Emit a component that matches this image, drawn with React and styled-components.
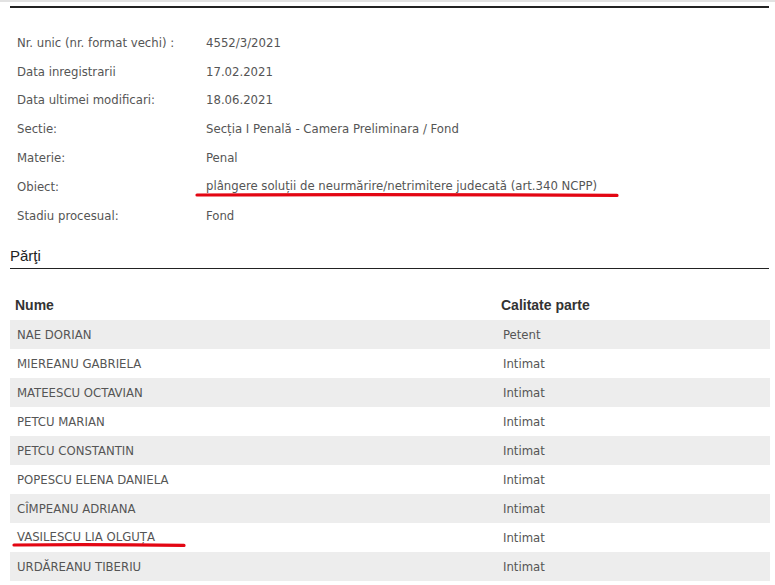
import React from "react";
import styled, { createGlobalStyle } from "styled-components";

const Global = createGlobalStyle`
  html, body { margin: 0; padding: 0; background: #fff; }
  body { font-family: "DejaVu Sans Condensed", "DejaVu Sans", sans-serif; }
`;

const Page = styled.div`
  width: 775px;
  height: 585px;
  overflow: hidden;
  background: #fff;
  border-top: 2px solid #e2e2e2;
  box-sizing: border-box;
`;

const Content = styled.div`
  padding: 4px 5px 0 10px;
`;

const TopRule = styled.div`
  height: 2px;
  background: #222;
  width: 759px;
`;

const InfoList = styled.div`
  display: flex;
  flex-direction: column;
  margin-top: 20px;
  padding-left: 7px;
`;

const InfoRow = styled.div`
  display: grid;
  grid-template-columns: 189px 1fr;
  height: 28.8px;
  align-items: center;
  font-size: 13px;
  color: #555;
`;

const Marked = styled.span`
  position: relative;
  display: inline-block;
  line-height: 16px;
`;

const Underline = styled.svg`
  position: absolute;
  left: ${(p) => p.$left}px;
  top: ${(p) => p.$top}px;
  overflow: visible;
  pointer-events: none;
`;

const SectionTitle = styled.div`
  margin-top: 17px;
  font-family: "Liberation Sans", Arial, sans-serif;
  font-size: 15px;
  color: #222;
  height: 21px;
  line-height: 17px;
  border-bottom: 1.5px solid #222;
  width: 759px;
`;

const Table = styled.div`
  margin-top: 22px;
  width: 760px;
`;

const Row = styled.div`
  display: grid;
  grid-template-columns: 485px 1fr;
  height: 29px;
  align-items: center;
  background: ${(p) => (p.$shade ? "#ededed" : "transparent")};
`;

const HeadCell = styled.div`
  font-family: "Liberation Sans", Arial, sans-serif;
  font-weight: bold;
  font-size: 14px;
  color: #333;
  padding-left: ${(p) => p.$pad}px;
`;

const Cell = styled.div`
  font-size: 13px;
  color: #555;
  padding-left: ${(p) => p.$pad}px;
`;

const Mark = ({ width, left, top }) => (
  <Underline $left={left} $top={top} width={width} height="6">
    <path
      d={`M2 3 Q ${width * 0.5} 2.2 ${width - 2} 3.4`}
      stroke="#e30613"
      strokeWidth="3.2"
      strokeLinecap="round"
      fill="none"
    />
  </Underline>
);

const info = [
  ["Nr. unic (nr. format vechi) :", "4552/3/2021"],
  ["Data inregistrarii", "17.02.2021"],
  ["Data ultimei modificari:", "18.06.2021"],
  ["Sectie:", "Secția I Penală - Camera Preliminara / Fond"],
  ["Materie:", "Penal"],
  ["Obiect:", "plângere soluții de neurmărire/netrimitere judecată (art.340 NCPP)", true],
  ["Stadiu procesual:", "Fond"],
];

const parties = [
  ["NAE DORIAN", "Petent"],
  ["MIEREANU GABRIELA", "Intimat"],
  ["MATEESCU OCTAVIAN", "Intimat"],
  ["PETCU MARIAN", "Intimat"],
  ["PETCU CONSTANTIN", "Intimat"],
  ["POPESCU ELENA DANIELA", "Intimat"],
  ["CÎMPEANU ADRIANA", "Intimat"],
  ["VASILESCU LIA OLGUȚA", "Intimat", true],
  ["URDĂREANU TIBERIU", "Intimat"],
];

export default function App() {
  return (
    <Page>
      <Global />
      <Content>
        <TopRule />
        <InfoList>
          {info.map(([k, v, m]) => (
            <InfoRow key={k}>
              <span>{k}</span>
              {m ? (
                <Marked>
                  {v}
                  <Mark width={424} left={-11} top={14} />
                </Marked>
              ) : (
                <span>{v}</span>
              )}
            </InfoRow>
          ))}
        </InfoList>
        <SectionTitle>Părţi</SectionTitle>
        <Table>
          <Row>
            <HeadCell $pad={5}>Nume</HeadCell>
            <HeadCell $pad={6}>Calitate parte</HeadCell>
          </Row>
          {parties.map(([n, c, m], i) => (
            <Row key={n} $shade={i % 2 === 0}>
              <Cell $pad={7}>
                {m ? (
                  <Marked>
                    {n}
                    <Mark width={174} left={-5} top={13} />
                  </Marked>
                ) : (
                  n
                )}
              </Cell>
              <Cell $pad={8}>{c}</Cell>
            </Row>
          ))}
        </Table>
      </Content>
    </Page>
  );
}
